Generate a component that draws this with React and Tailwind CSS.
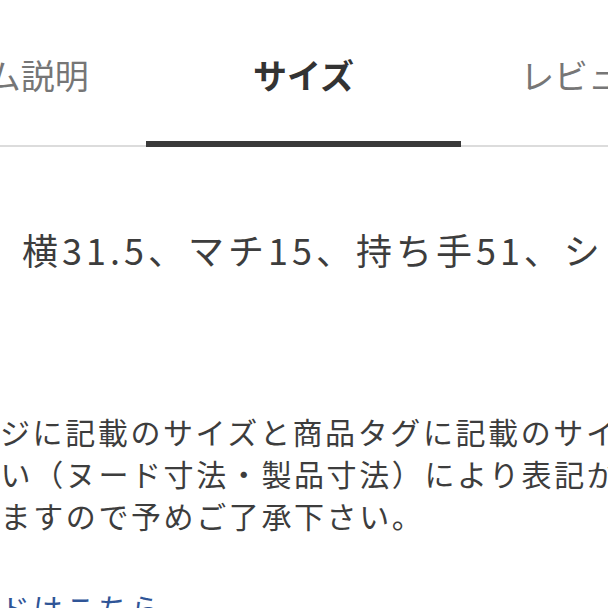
const tabs = [
  { label: 'アイテム説明', active: false },
  { label: 'サイズ', active: true },
  { label: 'レビュー(12)', active: false },
];

export default function App() {
  return (
    <div
      className="w-[608px] h-[608px] overflow-hidden bg-white text-[#3d3d3d]"
      style={{ fontFamily: '"Noto Sans CJK JP", "Noto Sans", sans-serif' }}
    >
      <div className="flex border-b-2 border-[#dcdcdc] ml-[-169px] w-[945px]">
        {tabs.map(tab => (
          <div key={tab.label} className="w-[315px] flex flex-col shrink-0">
            <div
              className={
                'h-[141px] flex items-center justify-center pt-[8px] text-[34px] whitespace-nowrap ' +
                (tab.active ? 'font-bold text-[#333333]' : 'text-[#767676]')
              }
            >
              {tab.label}
            </div>
            <div className={'h-[6px] -mb-[2px] ' + (tab.active ? 'bg-[#3a3a3a]' : '')} />
          </div>
        ))}
      </div>

      <p className="mt-[75px] pl-[22px] text-[36px] leading-[54px] tracking-[4px] whitespace-nowrap">
        横31.5、マチ15、持ち手51、ショルダー120
      </p>

      <div className="mt-[134px] ml-[-195px] text-[30px] leading-[42px] tracking-[2.6px] whitespace-nowrap">
        <p>※当商品ページに記載のサイズと商品タグに記載のサイズが、</p>
        <p>計測方法の違い（ヌード寸法・製品寸法）により表記が異なる</p>
        <p>場合がございますので予めご了承下さい。</p>
        <a href="#" className="block mt-[50px] pl-[33px] text-[#2f5597]">
          サイズガイドはこちら
        </a>
      </div>
    </div>
  );
}
